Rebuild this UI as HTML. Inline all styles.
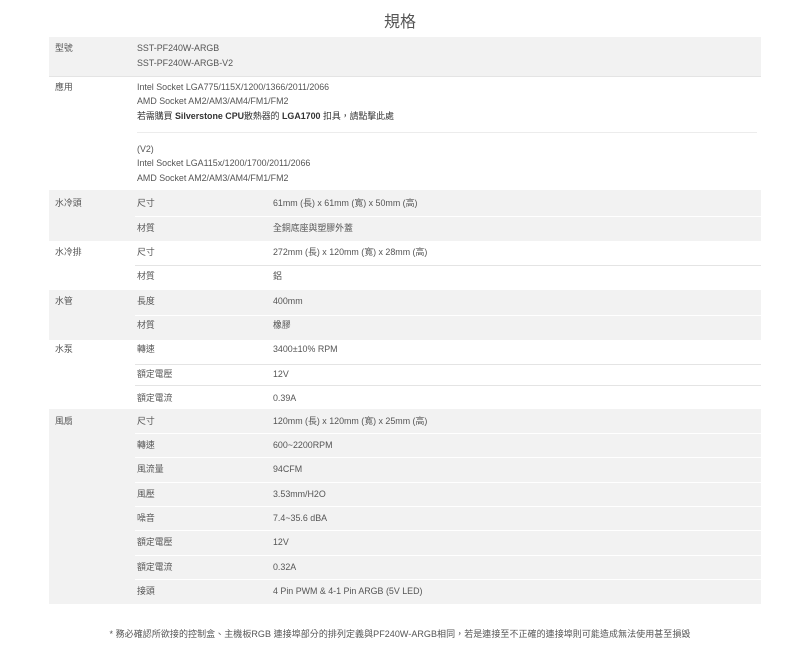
<!DOCTYPE html>
<html><head><meta charset="utf-8"><style>
*{margin:0;padding:0;box-sizing:border-box}
body{width:800px;height:648px;background:#fff;font-family:"Liberation Sans","Noto Sans CJK TC",sans-serif;color:#555;font-size:8.9px;position:relative;overflow:hidden}
.t{position:absolute;white-space:nowrap;line-height:12px}
.bg{position:absolute;left:49px;width:712px;background:#f2f2f2}
.ln{position:absolute;left:135px;width:626px;height:1px;background:#e4e4e4}
.ln.w{background:#fff}
h1{position:absolute;top:8px;left:0;width:800px;text-align:center;font-size:16px;font-weight:normal;color:#555;font-family:"Noto Sans CJK TC",sans-serif}
</style></head><body>
<h1>規格</h1>
<div class="bg" style="top:37px;height:39px"></div>
<div class="bg" style="top:190px;height:51px"></div>
<div class="bg" style="top:290px;height:50px"></div>
<div class="bg" style="top:409px;height:195px"></div>
<div class="ln" style="top:76px;left:49px;width:712px"></div>
<div class="ln" style="top:132px;left:137px;width:620px;background:#ececec"></div>
<div class="ln w" style="top:216px"></div>
<div class="ln" style="top:265px"></div>
<div class="ln w" style="top:315px"></div>
<div class="ln" style="top:364px"></div>
<div class="ln" style="top:385px"></div>
<div class="ln w" style="top:433px"></div>
<div class="ln w" style="top:457px"></div>
<div class="ln w" style="top:482px"></div>
<div class="ln w" style="top:506px"></div>
<div class="ln w" style="top:530px"></div>
<div class="ln w" style="top:555px"></div>
<div class="ln w" style="top:579px"></div>

<div class="t" style="left:55px;top:42px">型號</div>
<div class="t" style="left:137px;top:42px">SST-PF240W-ARGB</div>
<div class="t" style="left:137px;top:57px">SST-PF240W-ARGB-V2</div>

<div class="t" style="left:55px;top:81px">應用</div>
<div class="t" style="left:137px;top:81px">Intel Socket LGA775/115X/1200/1366/2011/2066</div>
<div class="t" style="left:137px;top:95px">AMD Socket AM2/AM3/AM4/FM1/FM2</div>
<div class="t" style="left:137px;top:110px;color:#333">若需購買 <b>Silverstone CPU</b>散熱器的 <b>LGA1700</b> 扣具，請點擊此處</div>
<div class="t" style="left:137px;top:143px">(V2)</div>
<div class="t" style="left:137px;top:157px">Intel Socket LGA115x/1200/1700/2011/2066</div>
<div class="t" style="left:137px;top:172px">AMD Socket AM2/AM3/AM4/FM1/FM2</div>

<div class="t" style="left:55px;top:197px">水冷頭</div>
<div class="t" style="left:137px;top:197px">尺寸</div><div class="t" style="left:273px;top:197px">61mm (長) x 61mm (寬) x 50mm (高)</div>
<div class="t" style="left:137px;top:222px">材質</div><div class="t" style="left:273px;top:222px">全銅底座與塑膠外蓋</div>

<div class="t" style="left:55px;top:246px">水冷排</div>
<div class="t" style="left:137px;top:246px">尺寸</div><div class="t" style="left:273px;top:246px">272mm (長) x 120mm (寬) x 28mm (高)</div>
<div class="t" style="left:137px;top:270px">材質</div><div class="t" style="left:273px;top:270px">鋁</div>

<div class="t" style="left:55px;top:295px">水管</div>
<div class="t" style="left:137px;top:295px">長度</div><div class="t" style="left:273px;top:295px">400mm</div>
<div class="t" style="left:137px;top:319px">材質</div><div class="t" style="left:273px;top:319px">橡膠</div>

<div class="t" style="left:55px;top:343px">水泵</div>
<div class="t" style="left:137px;top:343px">轉速</div><div class="t" style="left:273px;top:343px">3400±10% RPM</div>
<div class="t" style="left:137px;top:368px">額定電壓</div><div class="t" style="left:273px;top:368px">12V</div>
<div class="t" style="left:137px;top:392px">額定電流</div><div class="t" style="left:273px;top:392px">0.39A</div>

<div class="t" style="left:55px;top:415px">風扇</div>
<div class="t" style="left:137px;top:415px">尺寸</div><div class="t" style="left:273px;top:415px">120mm (長) x 120mm (寬) x 25mm (高)</div>
<div class="t" style="left:137px;top:439px">轉速</div><div class="t" style="left:273px;top:439px">600~2200RPM</div>
<div class="t" style="left:137px;top:463px">風流量</div><div class="t" style="left:273px;top:463px">94CFM</div>
<div class="t" style="left:137px;top:488px">風壓</div><div class="t" style="left:273px;top:488px">3.53mm/H2O</div>
<div class="t" style="left:137px;top:512px">噪音</div><div class="t" style="left:273px;top:512px">7.4~35.6 dBA</div>
<div class="t" style="left:137px;top:536px">額定電壓</div><div class="t" style="left:273px;top:536px">12V</div>
<div class="t" style="left:137px;top:561px">額定電流</div><div class="t" style="left:273px;top:561px">0.32A</div>
<div class="t" style="left:137px;top:585px">接頭</div><div class="t" style="left:273px;top:585px">4 Pin PWM &amp; 4-1 Pin ARGB (5V LED)</div>

<div class="t" style="left:0;width:800px;text-align:center;top:628px;font-size:9px;letter-spacing:0.05px">* 務必確認所欲接的控制盒、主機板RGB 連接埠部分的排列定義與PF240W-ARGB相同，若是連接至不正確的連接埠則可能造成無法使用甚至損毀</div>
</body></html>
